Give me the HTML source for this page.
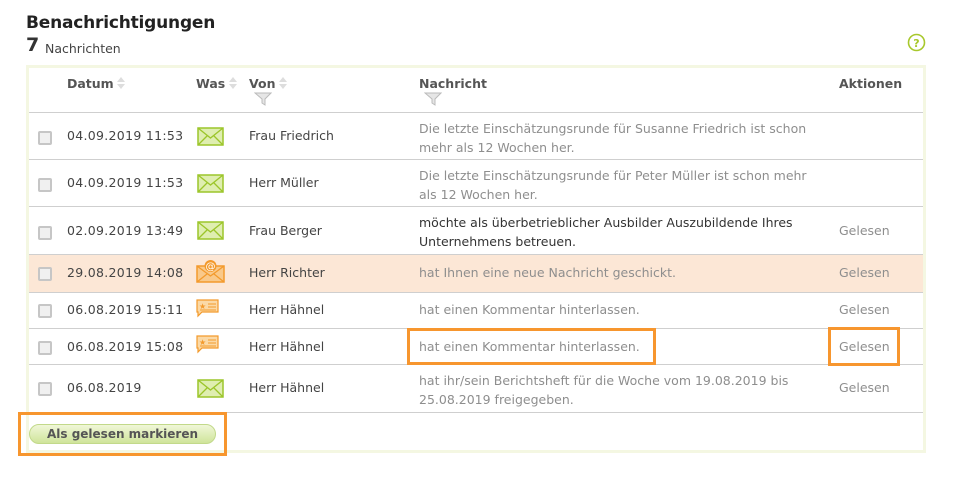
<!DOCTYPE html>
<html><head><meta charset="utf-8"><style>
body{margin:0;width:973px;height:478px;background:#fff;font-family:"DejaVu Sans","Liberation Sans",sans-serif;font-size:12.5px;color:#444;position:relative;overflow:hidden}
.a{position:absolute;white-space:nowrap}
h1{position:absolute;left:26px;top:13px;margin:0;font-size:17px;font-weight:bold;color:#222;letter-spacing:-0.2px}
.box{position:absolute;left:26px;top:65px;width:894px;height:382px;border:3px solid #f4f7e2}
.line{position:absolute;left:29px;width:894px;height:1px;background:#cfcfcf}
.th{font-weight:bold;color:#555;font-size:12.5px}
.cb{position:absolute;left:38px;width:10px;height:10px;border:2px solid #c6c6c6;background:#f0f0f0;border-radius:2px}
.g{color:#8e8e8e}
.d{letter-spacing:0.3px}
.hl{position:absolute;border:3px solid #f7962e}
</style></head><body>
<h1>Benachrichtigungen</h1>
<div class="a" style="left:26px;top:34px;font-size:19px;font-weight:bold;color:#333">7</div>
<div class="a" style="left:45px;top:41px;font-size:12.5px;color:#444">Nachrichten</div>
<svg class="a" style="left:907px;top:33px" width="19" height="19"><circle cx="9.5" cy="9.5" r="8" fill="none" stroke="#a8c82c" stroke-width="1.6"/><text x="9.5" y="14" text-anchor="middle" font-size="11" font-weight="bold" fill="#a8c82c" font-family="DejaVu Sans">?</text></svg>
<div class="box"></div>
<div class="a" style="left:29px;top:255px;width:894px;height:37px;background:#fce7d6"></div>
<div class="line" style="top:112px"></div>
<div class="line" style="top:159px"></div>
<div class="line" style="top:206px"></div>
<div class="line" style="top:254px"></div>
<div class="line" style="top:292px"></div>
<div class="line" style="top:328px"></div>
<div class="line" style="top:364px"></div>
<div class="line" style="top:412px"></div>
<div class="a" style="left:237px;top:413px;width:686px;height:37px;background:#fff"></div>

<div class="a th" style="left:67px;top:76px">Datum</div>
<div class="a th" style="left:196px;top:76px">Was</div>
<div class="a th" style="left:249px;top:76px">Von</div>
<div class="a th" style="left:419px;top:76px">Nachricht</div>
<div class="a th" style="left:839px;top:76px">Aktionen</div>
<svg class="a" style="left:116px;top:75px" width="10" height="16"><path d="M1 7L5 2L9 7Z M1 9L9 9L5 14Z" fill="#ddd"/></svg>
<svg class="a" style="left:228px;top:75px" width="10" height="16"><path d="M1 7L5 2L9 7Z M1 9L9 9L5 14Z" fill="#ddd"/></svg>
<svg class="a" style="left:278px;top:75px" width="10" height="16"><path d="M1 7L5 2L9 7Z M1 9L9 9L5 14Z" fill="#ddd"/></svg>
<svg class="a" style="left:254px;top:92px" width="18" height="15"><path d="M1 1H17L11 7V13L8 11V7Z" fill="#e6e6e6" stroke="#bbb"/></svg>
<svg class="a" style="left:424px;top:92px" width="18" height="15"><path d="M1 1H17L11 7V13L8 11V7Z" fill="#e6e6e6" stroke="#bbb"/></svg>

<div class="cb" style="top:131px"></div>
<div class="a d" style="left:67px;top:128px">04.09.2019 11:53</div>
<svg class="a" style="left:197px;top:127px" width="27" height="19"><rect x="1" y="1" width="25" height="17" fill="#dfeeb0" stroke="#9cc52a" stroke-width="1.5"/><path d="M1 1L13.5 11L26 1M1 18L10 9M26 18L17 9" fill="none" stroke="#9cc52a" stroke-width="1.3"/></svg>
<div class="a" style="left:249px;top:128px">Frau Friedrich</div>
<div class="a g" style="left:419px;top:119px;line-height:19px">Die letzte Einschätzungsrunde für Susanne Friedrich ist schon<br>mehr als 12 Wochen her.</div>

<div class="cb" style="top:178px"></div>
<div class="a d" style="left:67px;top:175px">04.09.2019 11:53</div>
<svg class="a" style="left:197px;top:174px" width="27" height="19"><rect x="1" y="1" width="25" height="17" fill="#dfeeb0" stroke="#9cc52a" stroke-width="1.5"/><path d="M1 1L13.5 11L26 1M1 18L10 9M26 18L17 9" fill="none" stroke="#9cc52a" stroke-width="1.3"/></svg>
<div class="a" style="left:249px;top:175px">Herr Müller</div>
<div class="a g" style="left:419px;top:166px;line-height:19px">Die letzte Einschätzungsrunde für Peter Müller ist schon mehr<br>als 12 Wochen her.</div>

<div class="cb" style="top:226px"></div>
<div class="a d" style="left:67px;top:223px">02.09.2019 13:49</div>
<svg class="a" style="left:197px;top:221px" width="27" height="19"><rect x="1" y="1" width="25" height="17" fill="#dfeeb0" stroke="#9cc52a" stroke-width="1.5"/><path d="M1 1L13.5 11L26 1M1 18L10 9M26 18L17 9" fill="none" stroke="#9cc52a" stroke-width="1.3"/></svg>
<div class="a" style="left:249px;top:223px">Frau Berger</div>
<div class="a" style="left:419px;top:213px;line-height:19px;color:#333">möchte als überbetrieblicher Ausbilder Auszubildende Ihres<br>Unternehmens betreuen.</div>
<div class="a g" style="left:839px;top:223px">Gelesen</div>

<div class="cb" style="top:267px"></div>
<div class="a d" style="left:67px;top:265px">29.08.2019 14:08</div>
<svg class="a" style="left:196px;top:259px" width="30" height="24"><rect x="1" y="7" width="27" height="16" fill="#f9c98a" stroke="#f39a2c" stroke-width="1.5"/><path d="M1 7L14.5 17L28 7M1 23L11 15M28 23L18 15" fill="none" stroke="#f39a2c" stroke-width="1.3"/><circle cx="14.5" cy="7" r="6" fill="#f39a2c"/><text x="14.5" y="10.5" text-anchor="middle" font-size="10" fill="#fff" font-family="DejaVu Sans">@</text></svg>
<div class="a" style="left:249px;top:265px">Herr Richter</div>
<div class="a g" style="left:419px;top:265px">hat Ihnen eine neue Nachricht geschickt.</div>
<div class="a g" style="left:839px;top:265px">Gelesen</div>

<div class="cb" style="top:304px"></div>
<div class="a d" style="left:67px;top:302px">06.08.2019 15:11</div>
<svg class="a" style="left:196px;top:299px" width="24" height="19"><path d="M1 1H22V13H6L2 17V13H1Z" fill="#fbd9a6" stroke="#f39a2c" stroke-width="1.2"/><text x="3" y="10" font-size="8" fill="#f39a2c">★</text><path d="M12 5H20M12 8H20M4 11H20" stroke="#f39a2c" stroke-width="1"/></svg>
<div class="a" style="left:249px;top:302px">Herr Hähnel</div>
<div class="a g" style="left:419px;top:302px">hat einen Kommentar hinterlassen.</div>
<div class="a g" style="left:839px;top:302px">Gelesen</div>

<div class="cb" style="top:341px"></div>
<div class="a d" style="left:67px;top:339px">06.08.2019 15:08</div>
<svg class="a" style="left:196px;top:335px" width="24" height="19"><path d="M1 1H22V13H6L2 17V13H1Z" fill="#fbd9a6" stroke="#f39a2c" stroke-width="1.2"/><text x="3" y="10" font-size="8" fill="#f39a2c">★</text><path d="M12 5H20M12 8H20M4 11H20" stroke="#f39a2c" stroke-width="1"/></svg>
<div class="a" style="left:249px;top:339px">Herr Hähnel</div>
<div class="a g" style="left:419px;top:339px">hat einen Kommentar hinterlassen.</div>
<div class="a g" style="left:839px;top:339px">Gelesen</div>

<div class="cb" style="top:382px"></div>
<div class="a d" style="left:67px;top:380px">06.08.2019</div>
<svg class="a" style="left:197px;top:379px" width="27" height="19"><rect x="1" y="1" width="25" height="17" fill="#dfeeb0" stroke="#9cc52a" stroke-width="1.5"/><path d="M1 1L13.5 11L26 1M1 18L10 9M26 18L17 9" fill="none" stroke="#9cc52a" stroke-width="1.3"/></svg>
<div class="a" style="left:249px;top:380px">Herr Hähnel</div>
<div class="a g" style="left:419px;top:371px;line-height:19px">hat ihr/sein Berichtsheft für die Woche vom 19.08.2019 bis<br>25.08.2019 freigegeben.</div>
<div class="a g" style="left:839px;top:380px">Gelesen</div>

<div class="a" style="left:29px;top:424px;width:185px;height:18px;border:1px solid #c2d98a;border-radius:10px;background:linear-gradient(#f0f7d8,#cfe49a);font-weight:bold;font-size:12px;color:#555;text-align:center;line-height:18px">Als gelesen markieren</div>

<div class="hl" style="left:407px;top:328px;width:243px;height:31px"></div>
<div class="hl" style="left:828px;top:327px;width:66px;height:33px"></div>
<div class="hl" style="left:18px;top:412px;width:203px;height:38px"></div>
</body></html>
